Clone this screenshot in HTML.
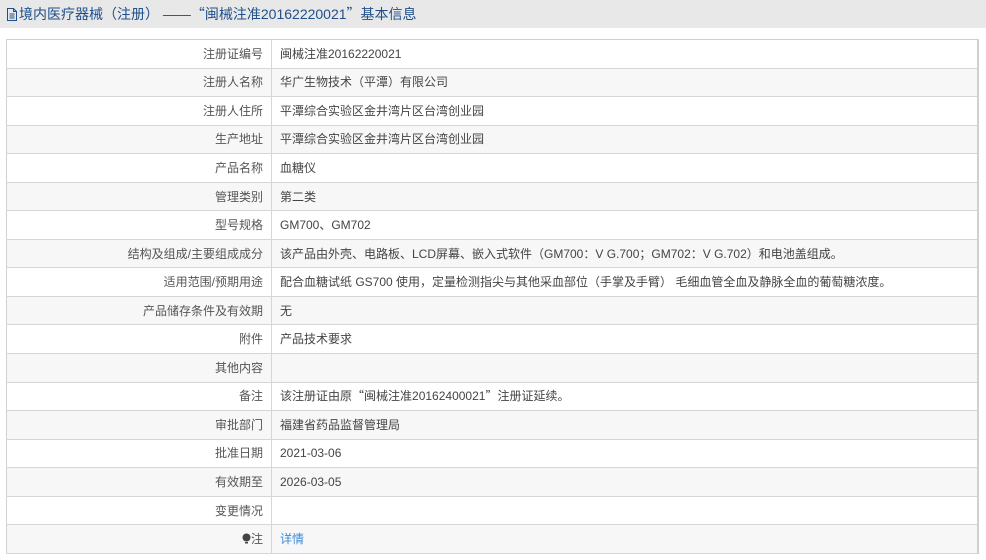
<!DOCTYPE html>
<html><head><meta charset="utf-8">
<style>
*{margin:0;padding:0;box-sizing:border-box}
body{width:986px;height:560px;background:#fff;font-family:"Liberation Sans","Noto Sans CJK SC",sans-serif;font-size:12px;color:#444;overflow:hidden;position:relative}
.q{font-family:"Noto Sans CJK SC",sans-serif}
.hd{position:absolute;left:0;top:0;width:986px;height:28px;background:#e8e8e8;color:#1e4f8c;font-size:14px;line-height:28px;padding-left:6px}
.hd svg{vertical-align:-2px;margin-right:1px}
table{position:absolute;left:6px;top:39px;width:973px;border-collapse:collapse;border:1px solid #d0d0d0;border-right:2px solid #d0d0d0}
td{height:28.55px;border-bottom:1px solid #d6d6d6;padding:0 8px;line-height:16px}
td.l{width:265px;text-align:right;border-right:1px solid #d6d6d6;color:#555}
tr:nth-child(even) td{background:#f7f7f7}
a{color:#3d8bd8;text-decoration:none}
</style></head><body>
<div class="hd"><svg width="12" height="13" viewBox="0 0 12 13"><path d="M1.5 .5h6l3 3v9h-9z" fill="none" stroke="#1e4f8c"/><path d="M7.5 .5v3h3M3.5 6h5M3.5 8h5M3.5 10h5" fill="none" stroke="#1e4f8c"/></svg>境内医疗器械（注册） ——<span class="q">“</span>闽械注准20162220021<span class="q">”</span>基本信息</div>
<table>
<tr><td class="l">注册证编号</td><td>闽械注准20162220021</td></tr>
<tr><td class="l">注册人名称</td><td>华广生物技术（平潭）有限公司</td></tr>
<tr><td class="l">注册人住所</td><td>平潭综合实验区金井湾片区台湾创业园</td></tr>
<tr><td class="l">生产地址</td><td>平潭综合实验区金井湾片区台湾创业园</td></tr>
<tr><td class="l">产品名称</td><td>血糖仪</td></tr>
<tr><td class="l">管理类别</td><td>第二类</td></tr>
<tr><td class="l">型号规格</td><td>GM700、GM702</td></tr>
<tr><td class="l">结构及组成/主要组成成分</td><td>该产品由外壳、电路板、LCD屏幕、嵌入式软件（GM700：V G.700；GM702：V G.702）和电池盖组成。</td></tr>
<tr><td class="l">适用范围/预期用途</td><td>配合血糖试纸 GS700 使用，定量检测指尖与其他采血部位（手掌及手臂） 毛细血管全血及静脉全血的葡萄糖浓度。</td></tr>
<tr><td class="l">产品储存条件及有效期</td><td>无</td></tr>
<tr><td class="l">附件</td><td>产品技术要求</td></tr>
<tr><td class="l">其他内容</td><td></td></tr>
<tr><td class="l">备注</td><td>该注册证由原<span class="q">“</span>闽械注准20162400021<span class="q">”</span>注册证延续。</td></tr>
<tr><td class="l">审批部门</td><td>福建省药品监督管理局</td></tr>
<tr><td class="l">批准日期</td><td>2021-03-06</td></tr>
<tr><td class="l">有效期至</td><td>2026-03-05</td></tr>
<tr><td class="l">变更情况</td><td></td></tr>
<tr><td class="l"><svg width="9" height="11" viewBox="0 0 9 11" style="vertical-align:-1px"><circle cx="4.5" cy="4.5" r="4" fill="#444"/><rect x="3" y="9" width="3" height="1.5" fill="#444"/></svg>注</td><td><a>详情</a></td></tr>
</table>
</body></html>
